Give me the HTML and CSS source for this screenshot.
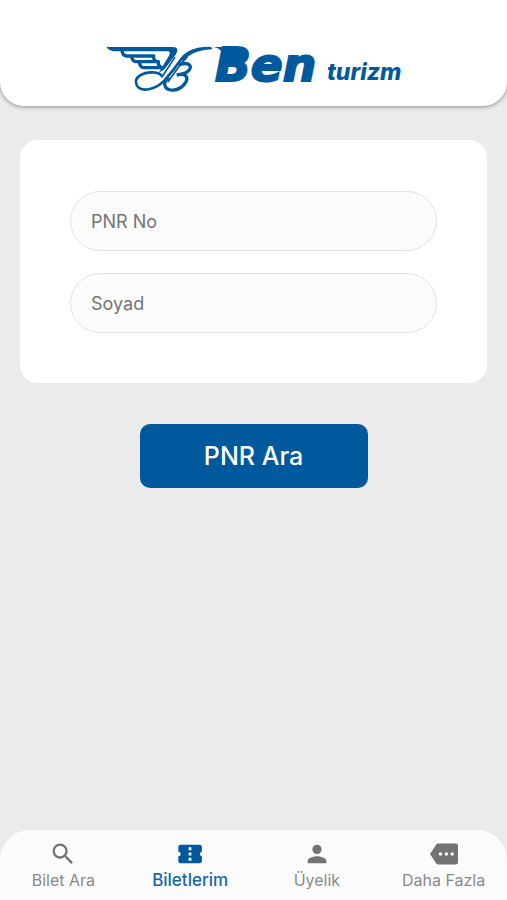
FILE: index.html
```html
<!DOCTYPE html>
<html lang="tr">
<head>
<meta charset="utf-8">
<meta name="viewport" content="width=device-width, initial-scale=1">
<title>Ben Turizm</title>
<link rel="stylesheet" href="styles.css">
</head>
<body>
<header class="header">
  <div class="brand">
    <svg class="emblem" viewBox="22 24 318 144" aria-hidden="true">
      <path class="fill" d="M23 29Q30 43 56 43H208Q217 44 211 56L180 107L196 98L232 52Q244 30 222 30H50Q34 31 23 29Z"/>
      <path class="line wing" d="M70 40Q71 56 84 57H168M99 58Q100 73 112 74H182M122 75Q124 91 134 92H192"/>
      <path class="line wing" d="M165 54V62Q166 72 174 73M179 72V80Q180 89 188 90"/>
      <path class="line" d="M256 58C242 72 234 86 222 101L197 131C171 158 126 168 114 144C103 120 133 105 164 106C177 107 184 110 188 115"/>
      <path class="line thin" d="M264 62C250 74 242 88 208 134M228 62L190 120"/>
      <path class="line letter" d="M244 82C262 76 280 82 274 95C268 107 250 112 234 114C266 107 272 124 256 143C239 163 207 164 200 149C195 138 199 130 208 124"/>
      <path class="fill" d="M244 65Q270 29 330 29Q342 29 340 37Q315 38 293 45Q272 52 254 72Z"/>
    </svg>
    <svg class="wordmark" viewBox="0 0 188 48" role="img" aria-label="Ben turizm">
      <path class="fill" d="M0 2H24V14H9Q10 4 0 2Z"/>
      <text class="ben" x="1" y="36">Ben</text>
      <text class="turizm" x="113" y="35">turizm</text>
    </svg>
  </div>
</header>
<main class="main">
  <form id="pnr-form" class="card">
    <input class="field" type="text" name="pnr" placeholder="PNR No" aria-label="PNR No">
    <input class="field" type="text" name="surname" placeholder="Soyad" aria-label="Soyad">
  </form>
  <button class="submit" type="submit" form="pnr-form">PNR Ara</button>
</main>
<nav class="tabs">
  <a class="tab" href="#ara">
    <svg class="icon" viewBox="0 0 24 24" aria-hidden="true"><path d="M15.5 14h-.79l-.28-.27A6.47 6.47 0 0 0 16 9.5 6.5 6.5 0 1 0 9.5 16c1.61 0 3.09-.59 4.23-1.57l.27.28v.79l5 4.99L20.49 19zm-6 0a4.5 4.5 0 1 1 0-9 4.5 4.5 0 0 1 0 9z"/></svg>
    <span>Bilet Ara</span>
  </a>
  <a class="tab active" href="#biletlerim" aria-current="page">
    <svg class="icon" viewBox="0 0 24 24" aria-hidden="true"><path d="M20.500 12c0-1 .7-1.700 1.700-2V6a2 2 0 0 0-2-2H4a2 2 0 0 0-2 2v4a2 2 0 0 1 0 4v4c0 1.100.9 2 2 2h16.200a2 2 0 0 0 2-2v-4c-1-.3-1.700-1-1.700-2zm-7.300 5.700h-2.400v-2.400h2.400zm0-4.500h-2.400v-2.400h2.400zm0-4.500h-2.400V6.300h2.400z"/></svg>
    <span>Biletlerim</span>
  </a>
  <a class="tab" href="#uyelik">
    <svg class="icon" viewBox="0 0 24 24" aria-hidden="true"><path d="M12 12a4 4 0 1 0 0-8 4 4 0 0 0 0 8zm0 2c-2.67 0-8 1.34-8 4v2h16v-2c0-2.66-5.33-4-8-4z"/></svg>
    <span>Üyelik</span>
  </a>
  <a class="tab" href="#daha">
    <svg class="icon" viewBox="0 0 24 24" aria-hidden="true"><path d="M22 3H7c-.69 0-1.23.35-1.59.88L0 12l5.41 8.11c.36.53.97.89 1.66.89H22a2 2 0 0 0 2-2V5a2 2 0 0 0-2-2zM9 13.5a1.5 1.5 0 1 1 0-3 1.5 1.5 0 0 1 0 3zm5 0a1.5 1.5 0 1 1 0-3 1.5 1.5 0 0 1 0 3zm5 0a1.5 1.5 0 1 1 0-3 1.5 1.5 0 0 1 0 3z"/></svg>
    <span>Daha Fazla</span>
  </a>
</nav>
</body>
</html>
```
FILE: styles.css
```css
* {
  box-sizing: border-box;
}

body {
  margin: 0;
  min-height: 100vh;
  display: flex;
  flex-direction: column;
  background: #ebebeb;
  font-family: Inter, "Liberation Sans", sans-serif;
}

.header {
  padding: 45px 20px 13px;
  background: #fff;
  border-radius: 0 0 24px 24px;
  box-shadow: 0 1px 4px rgba(0, 0, 0, 0.4);
}

.brand {
  display: flex;
  justify-content: center;
  gap: 2px;
}

.emblem {
  width: 106px;
  height: 48px;
}

.wordmark {
  width: 188px;
  height: 48px;
  overflow: visible;
}

.fill,
.wordmark text {
  fill: #00599c;
}

.line {
  fill: none;
  stroke: #00599c;
  stroke-width: 8;
  stroke-linecap: round;
}

.wing {
  stroke-width: 10;
  stroke-linecap: butt;
}

.thin {
  stroke-width: 5;
}

.letter {
  stroke-width: 10;
}

.ben {
  font: italic 700 47px "DejaVu Sans", sans-serif;
  stroke: #00599c;
  stroke-width: 2;
}

.turizm {
  font: italic 800 23px Inter, sans-serif;
}

.main {
  flex: 1;
  display: flex;
  flex-direction: column;
  align-items: center;
  padding: 34px 20px;
}

.card {
  align-self: stretch;
  display: flex;
  flex-direction: column;
  gap: 22px;
  padding: 51px 50px 50px;
  background: #fff;
  border-radius: 18px;
}

.field {
  width: 100%;
  height: 60px;
  padding: 0 20px;
  border: 1px solid #e3e3e3;
  border-radius: 30px;
  background: #fbfbfb;
  color: #333;
  font: 400 18px Inter, sans-serif;
}

.field::placeholder {
  color: #757575;
  opacity: 1;
}

.submit {
  width: 228px;
  height: 64px;
  margin-top: 41px;
  border: 0;
  border-radius: 10px;
  background: #00599c;
  color: #fff;
  font: 500 25px Inter, sans-serif;
}

.tabs {
  display: grid;
  grid-template-columns: repeat(4, 1fr);
  height: 70px;
  background: #fbfbfb;
  border-radius: 30px 30px 0 0;
}

.tab {
  display: flex;
  flex-direction: column;
  align-items: center;
  gap: 2px;
  padding-top: 10px;
  color: #8a8a8a;
  font-size: 16px;
  line-height: 20px;
  text-decoration: none;
}

.active {
  color: #1668a8;
  font-size: 17px;
  font-weight: 500;
}

.icon {
  width: 28px;
  height: 28px;
  fill: #737373;
}

.active .icon {
  fill: #00599c;
}
```
